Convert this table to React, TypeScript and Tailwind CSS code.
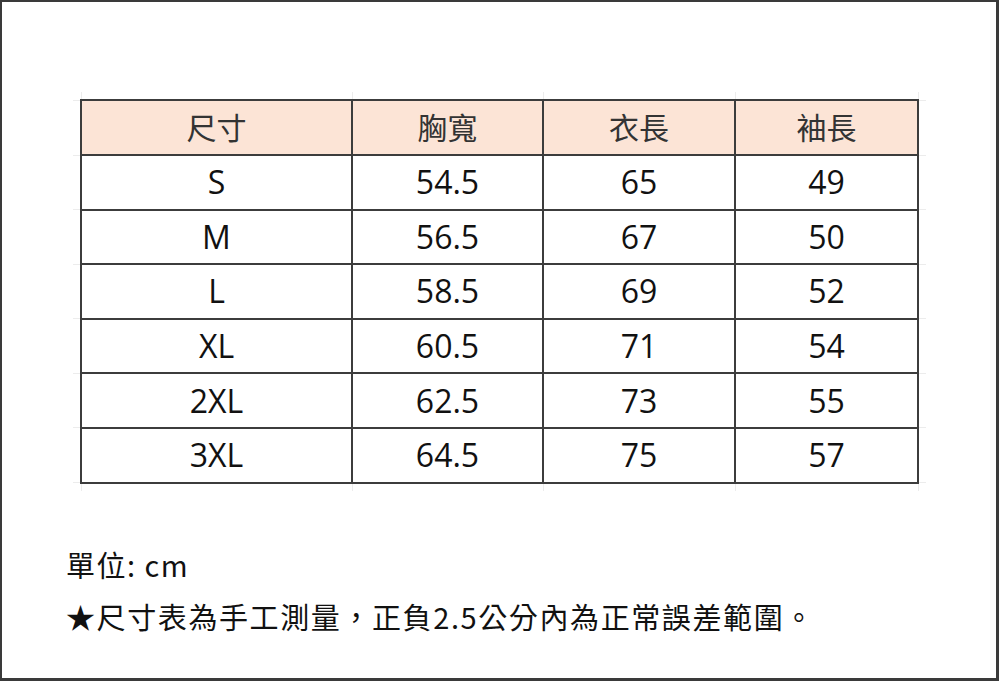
const header = ["尺寸", "胸寬", "衣長", "袖長"];

const rows = [
  ["S", "54.5", "65", "49"],
  ["M", "56.5", "67", "50"],
  ["L", "58.5", "69", "52"],
  ["XL", "60.5", "71", "54"],
  ["2XL", "62.5", "73", "55"],
  ["3XL", "64.5", "75", "57"],
];

const widths = ["w-[271px]", "w-[191px]", "w-[192px]", "w-[183px]"];

const font = { fontFamily: '"Open Sans", "Noto Sans CJK TC", sans-serif' };

// faint excel gridline stubs around the table
function EdgeRow() {
  return (
    <tr className="h-[8px]">
      <td className="p-0" />
      {widths.map((w, i) => (
        <td key={i} className={`${w} p-0 border-x border-[#ececec]`} />
      ))}
      <td className="p-0" />
    </tr>
  );
}

export default function App() {
  return (
    <div className="w-[1000px] h-[682px] bg-white">
      <div
        className="w-[999px] h-[681px] border-l-2 border-t-2 border-r-[3px] border-b-[3px] border-[#3a3a3a] pl-[71px] pt-[90px]"
        style={font}
      >
        <table className="border-collapse table-fixed">
          <colgroup>
            <col className="w-[8px]" />
            {widths.map((w, i) => (
              <col key={i} className={w} />
            ))}
            <col className="w-[8px]" />
          </colgroup>
          <tbody>
            <EdgeRow />
            <tr className="h-[55px]">
              <td className="p-0 border-y border-[#ececec]" />
              {header.map((h, i) => (
                <td
                  key={i}
                  className="p-0 border-2 border-[#3c3c3c] bg-[#fce4d6] text-center text-[30px] leading-none text-[#333]"
                >
                  {h}
                </td>
              ))}
              <td className="p-0 border-y border-[#ececec]" />
            </tr>
            {rows.map((r, ri) => (
              <tr key={ri} className="h-[54.6px]">
                <td className="p-0 border-y border-[#ececec]" />
                {r.map((c, ci) => (
                  <td
                    key={ci}
                    className="p-0 border-2 border-[#3c3c3c] text-center text-[32px] leading-none text-[#111]"
                  >
                    {c}
                  </td>
                ))}
                <td className="p-0 border-y border-[#ececec]" />
              </tr>
            ))}
            <EdgeRow />
          </tbody>
        </table>

        <div
          className="mt-[47px] -ml-[7px] text-[29px] leading-[52px] text-[#111]"
          style={{ fontFamily: '"Noto Sans CJK TC", sans-serif' }}
        >
          <div className="tracking-[1.5px]">單位: cm</div>
          <div className="tracking-[1.6px]">★尺寸表為手工測量，正負2.5公分內為正常誤差範圍。</div>
        </div>
      </div>
    </div>
  );
}
